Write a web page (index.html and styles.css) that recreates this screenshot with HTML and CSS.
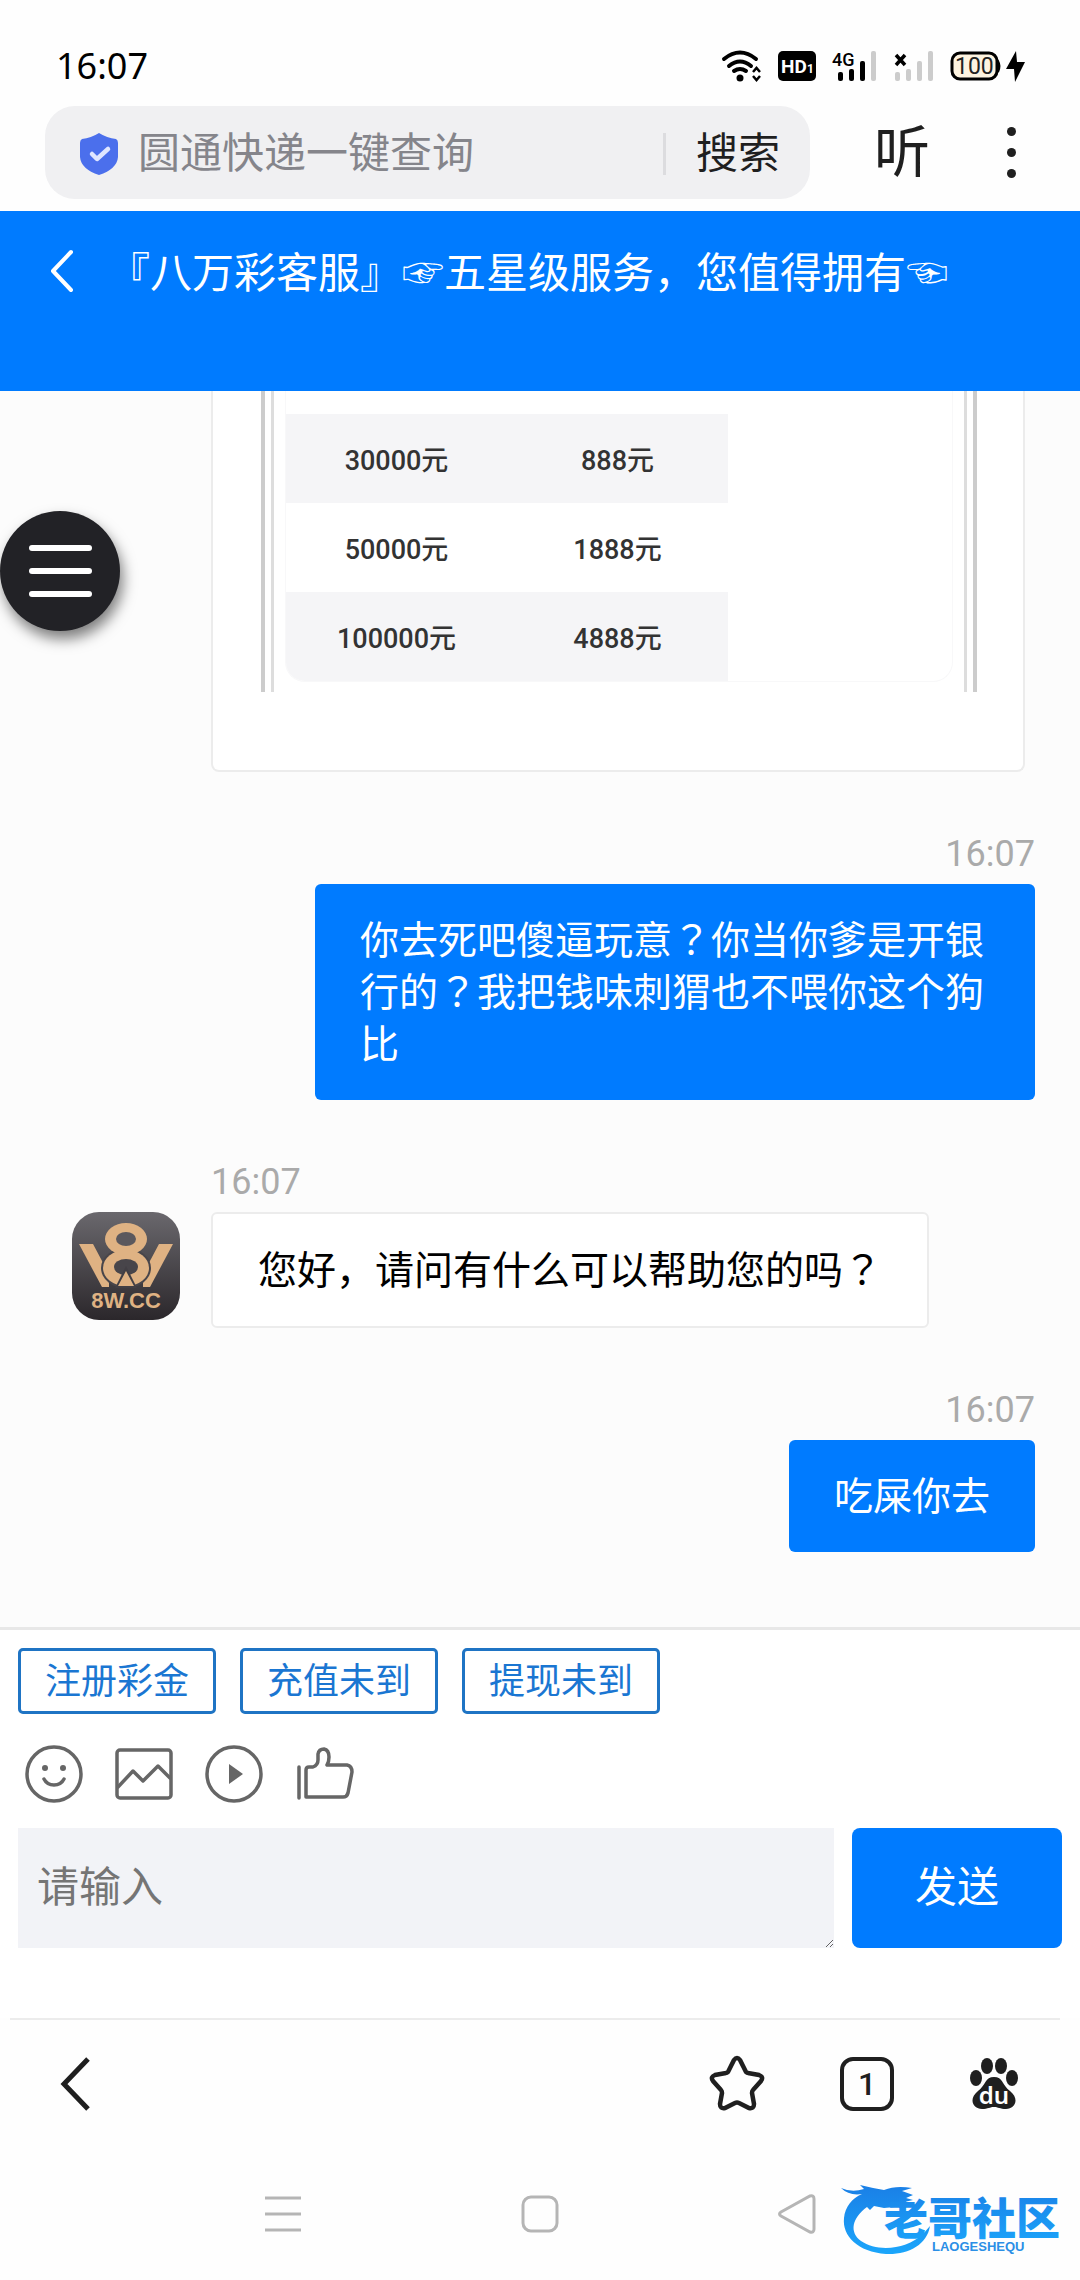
FILE: index.html
```html
<!DOCTYPE html>
<html lang="zh-CN">
<head>
    <meta charset="UTF-8">
    <meta name="viewport" content="width=device-width, initial-scale=1.0">
    <title>八万彩客服</title>
    <link rel="stylesheet" href="styles.css">
</head>
<body>

<div class="status">
    <span class="clock">16:07</span>
    <div class="status-icons">
        <svg class="wifi" width="40" height="32" viewBox="0 0 40 32">
            <g fill="none" stroke="#000" stroke-width="4" stroke-linecap="round">
                <path d="M2 9 Q18 -4 34 9"/>
                <path d="M7 16 Q18 7 29 16"/>
                <path d="M12 21 Q18 17 24 21"/>
            </g>
            <circle cx="18" cy="28" r="3.5"/>
            <path d="M31 22 l3.500 -4 l3.500 4 M31 26 l3.500 4 l3.500 -4" fill="none" stroke="#000" stroke-width="2.500"/>
        </svg>
        <svg class="hd" width="38" height="32" viewBox="0 0 38 32">
            <rect y="1" width="38" height="30" rx="5"/>
            <text x="3" y="23" font-size="19" fill="#fff">HD</text>
            <text x="29" y="23" font-size="12" fill="#fff">1</text>
        </svg>
        <svg class="signal" width="46" height="32" viewBox="0 0 46 32">
            <text class="net" x="0" y="16" font-size="18">4G</text>
            <rect x="6" y="22" width="5" height="9" rx="2"/>
            <rect x="17" y="19" width="5" height="12" rx="2"/>
            <rect x="28" y="11" width="5" height="20" rx="2"/>
            <rect x="39" y="1" width="5" height="30" rx="2" fill="#ccc"/>
        </svg>
        <svg class="signal" width="40" height="32" viewBox="0 0 40 32">
            <path d="M2 5 L11 15 M11 5 L2 15" stroke="#000" stroke-width="3.500"/>
            <g fill="#ccc">
                <rect x="1" y="22" width="5" height="9" rx="2"/>
                <rect x="12" y="19" width="5" height="12" rx="2"/>
                <rect x="23" y="11" width="5" height="20" rx="2"/>
                <rect x="34" y="1" width="5" height="30" rx="2"/>
            </g>
        </svg>
        <svg class="battery" width="76" height="32" viewBox="0 0 76 32">
            <rect x="2" y="3" width="45" height="26" rx="8" fill="#fdf3e0" stroke="#000" stroke-width="3"/>
            <path d="M48 11 q3 5 0 11 z" stroke="#000" stroke-width="2"/>
            <text x="5" y="24" font-size="23" fill="#222">100</text>
            <path d="M66 1 L56 19 H64 L65 32 L75 12 H67 Z"/>
        </svg>
    </div>
</div>

<div class="browser-bar">
    <form class="search">
        <svg width="38" height="42" viewBox="0 0 38 42">
            <path d="M19 0 Q27 5 36 6 Q38 7 38 10 V24 Q37 36 19 42 Q1 36 0 24 V10 Q0 7 2 6 Q11 5 19 0 Z" fill="#4b6fec"/>
            <path d="M12 21 L17 26 L28 16" fill="none" stroke="#dfe6ff" stroke-width="4.500" stroke-linecap="round" stroke-linejoin="round"/>
        </svg>
        <input type="text" aria-label="搜索" placeholder="圆通快递一键查询">
        <button type="button">搜索</button>
    </form>
    <button class="listen">听</button>
    <button class="more" aria-label="更多"><i></i><i></i><i></i></button>
</div>

<header class="chat-header">
    <button aria-label="返回">
        <svg width="24" height="44" viewBox="0 0 24 44">
            <path d="M21 3 L3 22 L21 41" fill="none" stroke="#fff" stroke-width="4" stroke-linecap="round" stroke-linejoin="round"/>
        </svg>
    </button>
    <h1>『八万彩客服』<span class="hand">☞</span>五星级服务，您值得拥有<span class="hand">☜</span></h1>
</header>

<main class="chat">
    <div class="card">
        <div class="frame">
            <div class="frame-inner">
                <div class="sheet">
                    <table>
                        <tr><td>30000元</td><td>888元</td></tr>
                        <tr><td>50000元</td><td>1888元</td></tr>
                        <tr><td>100000元</td><td>4888元</td></tr>
                    </table>
                </div>
            </div>
        </div>
    </div>

    <div class="message mine">
        <time>16:07</time>
        <p class="bubble">你去死吧傻逼玩意<span lang="zh-TW">？</span>你当你爹是开银行的<span lang="zh-TW">？</span>我把钱味刺猬也不喂你这个狗比</p>
    </div>

    <div class="message">
        <time>16:07</time>
        <div class="row">
            <svg class="avatar" width="108" height="108" viewBox="0 0 108 108">
                <defs>
                    <linearGradient id="avatar-bg" x1="0" y1="0" x2="0" y2="1">
                        <stop offset="0" stop-color="#6a686d"/>
                        <stop offset="1" stop-color="#2b272b"/>
                    </linearGradient>
                </defs>
                <rect width="108" height="108" rx="27" fill="url(#avatar-bg)"/>
                <g fill="#dfb283">
                    <path d="M7 32 H21 L37 62 L37 75 H30 Z"/>
                    <path d="M101 32 H87 L71 62 L71 75 H78 Z"/>
                </g>
                <ellipse cx="54" cy="56" rx="25" ry="20" fill="#48454a"/>
                <g fill="#dfb283">
                    <ellipse cx="54" cy="27" rx="21" ry="16"/>
                    <ellipse cx="54" cy="56" rx="23" ry="18"/>
                </g>
                <ellipse cx="54" cy="27" rx="10" ry="7" fill="#5b585d"/>
                <ellipse cx="54" cy="55" rx="12" ry="8" fill="#48454a"/>
                <path d="M54 54 L65 76 H43 Z" fill="#423f44"/>
                <path d="M54 59 L62 74 H46 Z" fill="#dfb283"/>
                <text x="54" y="96" text-anchor="middle" font-size="22">8W.CC</text>
            </svg>
            <p class="bubble">您好，请问有什么可以帮助您的吗<span lang="zh-TW">？</span></p>
        </div>
    </div>

    <div class="message mine">
        <time>16:07</time>
        <p class="bubble">吃屎你去</p>
    </div>

    <button class="float-menu" aria-label="菜单"><i></i><i></i><i></i></button>
</main>

<section class="composer">
    <div class="quick">
        <button>注册彩金</button>
        <button>充值未到</button>
        <button>提现未到</button>
    </div>
    <div class="tools">
        <button aria-label="表情">
            <svg width="58" height="58" viewBox="0 0 58 58">
                <circle cx="29" cy="29" r="27"/>
                <path d="M19 34 Q22 40 29 40 Q36 40 39 34"/>
                <circle class="solid" cx="20" cy="23" r="3"/>
                <circle class="solid" cx="38" cy="23" r="3"/>
            </svg>
        </button>
        <button aria-label="图片">
            <svg width="58" height="58" viewBox="0 0 58 58">
                <rect x="2" y="5" width="54" height="48" rx="3"/>
                <path d="M3 42 L18 26 L28 36 L43 21 L55 33"/>
            </svg>
        </button>
        <button aria-label="视频">
            <svg width="58" height="58" viewBox="0 0 58 58">
                <circle cx="29" cy="29" r="27"/>
                <path class="solid" d="M24 19 V39 L38 29 Z"/>
            </svg>
        </button>
        <button aria-label="点赞">
            <svg width="58" height="58" viewBox="0 0 58 58">
                <path d="M4 22 V53 M11 52 V25 Q11 22 14 22 H18 Q23 20 23 15 V9 Q24 4 29 4 Q34 5 34 12 Q34 17 32 20 H52 Q57 21 57 27 L53 48 Q52 52 48 52 Z"/>
            </svg>
        </button>
    </div>
    <div class="entry">
        <textarea rows="1" aria-label="消息" placeholder="请输入"></textarea>
        <button>发送</button>
    </div>
</section>

<nav class="browser-nav">
    <button aria-label="后退">
        <svg width="32" height="56" viewBox="0 0 32 56">
            <path d="M28 3 L4 28 L28 53" fill="none" stroke="#1f1f1f" stroke-width="5"/>
        </svg>
    </button>
    <div class="nav-right">
        <button aria-label="收藏">
            <svg width="56" height="56" viewBox="0 0 56 56">
                <path d="M25 4 Q28 0 31 4 L37 16 Q38 17 39 17 L50 19 Q55 21 52 25 L44 34 Q43 35 43 37 L45 48 Q45 53 40 52 L30 47 Q28 46 26 47 L16 52 Q11 53 11 48 L13 37 Q13 35 12 34 L4 25 Q1 21 6 19 L17 17 Q18 17 19 16 Z" fill="none" stroke="#1f1f1f" stroke-width="4.500"/>
            </svg>
        </button>
        <button class="tabs">1</button>
        <button aria-label="百度">
            <svg class="paw" width="50" height="54" viewBox="0 0 50 54">
                <ellipse cx="7" cy="21" rx="6" ry="8"/>
                <ellipse cx="18" cy="9" rx="6" ry="8"/>
                <ellipse cx="32" cy="9" rx="6" ry="8"/>
                <ellipse cx="43" cy="21" rx="6" ry="8"/>
                <path d="M25 20 C34 20 33 28 41 34 C51 42 46 52 37 52 C31 52 29 50 25 50 C21 50 19 52 13 52 C4 52 -1 42 9 34 C17 28 16 20 25 20 Z"/>
                <text x="25" y="47" text-anchor="middle" font-size="24" fill="#fff">du</text>
            </svg>
        </button>
    </div>
</nav>

<footer class="system-nav">
    <button aria-label="最近任务">
        <svg width="40" height="40" viewBox="0 0 40 40"><path d="M2 4 H38 M2 20 H38 M2 36 H38"/></svg>
    </button>
    <button aria-label="主页">
        <svg width="40" height="40" viewBox="0 0 40 40"><rect x="3" y="3" width="34" height="34" rx="8"/></svg>
    </button>
    <button aria-label="返回">
        <svg width="40" height="40" viewBox="0 0 40 40"><path d="M33 2 Q37 1 37 5 V35 Q37 39 33 38 L4 22 Q1 20 4 18 Z"/></svg>
    </button>
    <svg class="logo" width="226" height="80" viewBox="0 0 226 80">
        <defs>
            <linearGradient id="logo-fill" x1="0" y1="0" x2="0" y2="1">
                <stop offset="0" stop-color="#1a7fe6"/>
                <stop offset="1" stop-color="#1ba6fb"/>
            </linearGradient>
        </defs>
        <path fill="url(#logo-fill)" d="M1 12 Q12 17 24 13 L20 9 Q32 12 44 14 Q56 9 72 12 L62 15 L73 19 L66 22 L73 24 L60 27 L69 29 L55 31 L44 32 L34 30 L30 34 L27 31 C12 42 9 56 21 65 C37 76 66 74 83 58 L90 50 C87 69 68 79 46 78 C18 76 2 60 4 42 C5 31 12 22 22 18 Q9 20 1 12 Z"/>
        <text class="logo-name" x="44" y="59">老哥社区</text>
        <text class="logo-sub" x="92" y="75">LAOGESHEQU</text>
    </svg>
</footer>

</body>
</html>
```
FILE: styles.css
```css
* {
    box-sizing: border-box;
}
body {
    display: flex;
    flex-direction: column;
    min-height: 100vh;
    margin: 0;
    background: #fefefe;
    color: #000;
    font-family: Roboto, "Noto Sans CJK SC", sans-serif;
}
button {
    padding: 0;
    border: none;
    background: none;
    color: inherit;
    font: inherit;
    cursor: pointer;
}
svg {
    display: block;
    overflow: visible;
}

/* phone status bar */
.status {
    display: flex;
    justify-content: space-between;
    align-items: center;
    padding: 42px 54px 16px 56px;
}
.clock {
    font-family: "Noto Sans", sans-serif;
    font-size: 36px;
    line-height: 48px;
}
.status-icons {
    display: flex;
    gap: 16px;
}
.status-icons text {
    font-family: Roboto, sans-serif;
    font-weight: 700;
}
.status-icons .net {
    font-weight: 500;
}
.status-icons .battery text {
    font-weight: 400;
}

/* address bar */
.browser-bar {
    display: flex;
    align-items: center;
    padding: 0 54px 12px 45px;
}
.search {
    display: flex;
    flex: 1;
    align-items: center;
    height: 93px;
    padding: 2px 30px 0 35px;
    border-radius: 30px;
    background: #f0f0f2;
}
.search input {
    flex: 1;
    min-width: 0;
    margin-left: 20px;
    padding: 0;
    border: none;
    background: none;
    font: inherit;
    font-size: 42px;
    outline: none;
}
.search input::placeholder {
    color: #85858b;
}
.search button {
    padding-left: 30px;
    border-left: 3px solid #dcdcdf;
    color: #1f1f1f;
    font-size: 42px;
    line-height: 42px;
}
.listen {
    margin: 0 67px 0 64px;
    color: #1f1f1f;
    font-size: 56px;
    line-height: 56px;
    font-weight: 400;
}
.more {
    display: flex;
    flex-direction: column;
    gap: 12px;
    padding: 0 10px;
}
.more i {
    width: 9px;
    height: 9px;
    border-radius: 50%;
    background: #1f1f1f;
}

/* chat title */
.chat-header {
    display: flex;
    align-items: flex-start;
    height: 180px;
    padding: 38px 40px 0 50px;
    background: #007bff;
    color: #fff;
}
.chat-header h1 {
    margin: 0 0 0 34px;
    font-size: 42px;
    line-height: 50px;
    font-weight: 400;
    white-space: nowrap;
}
.hand {
    font-family: "DejaVu Sans", sans-serif;
    font-weight: 300;
}

/* messages */
.chat {
    position: relative;
    flex: 1;
    padding: 0 45px 0 72px;
    background: #fcfcfc;
}
.card {
    margin: 0 10px 0 139px;
    padding: 0 46px 78px 48px;
    border: 2px solid #ececec;
    border-top: none;
    border-radius: 0 0 8px 8px;
    background: #fff;
}
.frame {
    padding: 0 6px;
    border: solid #ccc;
    border-width: 0 4px;
}
.frame-inner {
    padding: 0 11px 10px;
    border: solid #ddd;
    border-width: 0 3px;
}
.sheet {
    overflow: hidden;
    padding-top: 23px;
    border: solid #f8f8f9;
    border-width: 0 1px 1px;
    border-radius: 0 0 20px 20px;
}
.sheet table {
    width: 442px;
    border-collapse: collapse;
    table-layout: fixed;
    color: #333;
    font-size: 27px;
    font-weight: 500;
    text-align: center;
}
.sheet td {
    height: 89px;
    padding: 0;
}
.sheet tr:nth-child(odd) {
    background: #f5f5f7;
}
.message {
    display: flex;
    flex-direction: column;
    align-items: flex-start;
    margin-top: 62px;
}
.message time {
    margin: 0 0 10px 139px;
    color: #aaa;
    font-size: 36px;
    line-height: 40px;
}
.row {
    display: flex;
    align-items: flex-start;
    gap: 31px;
}
.avatar {
    flex: none;
}
.avatar text {
    fill: #dfb283;
    font-family: "Liberation Sans", sans-serif;
    font-weight: 700;
}
.bubble {
    max-width: 720px;
    margin: 0;
    padding: 31px 45px 29px;
    border: 2px solid #ececec;
    border-radius: 6px;
    background: #fff;
    font-size: 39px;
    line-height: 52px;
}
.mine {
    align-items: flex-end;
}
.mine .bubble {
    border: none;
    background: #007bff;
    color: #fff;
}
.float-menu {
    position: absolute;
    top: 120px;
    left: 0;
    display: flex;
    flex-direction: column;
    justify-content: center;
    align-items: center;
    gap: 17px;
    width: 120px;
    height: 120px;
    border-radius: 50%;
    background: #222226;
    box-shadow: 3px 8px 14px rgba(0, 0, 0, 0.5);
}
.float-menu i {
    width: 63px;
    height: 6px;
    border-radius: 3px;
    background: #fff;
}

/* input area */
.composer {
    padding: 18px 18px 70px;
    border-top: 3px solid #e8e8e8;
    background: #fff;
}
.quick {
    display: flex;
    gap: 24px;
}
.quick button {
    height: 66px;
    padding: 2px 24px 0;
    border: 3px solid #1f74c4;
    border-radius: 5px;
    color: #1a76d2;
    font-size: 36px;
    line-height: 58px;
}
.tools {
    display: flex;
    gap: 32px;
    padding: 31px 7px 25px;
}
.tools svg {
    fill: none;
    stroke: #666;
    stroke-width: 3.5px;
    stroke-linejoin: round;
    stroke-linecap: round;
}
.tools .solid {
    fill: #666;
    stroke: none;
}
.entry {
    display: flex;
    gap: 18px;
}
.entry textarea {
    flex: 1;
    height: 120px;
    padding: 30px 19px;
    border: none;
    background: #f2f3f7;
    font: inherit;
    font-size: 42px;
    line-height: 60px;
    outline: none;
}
.entry textarea::placeholder {
    color: #757575;
}
.entry button {
    width: 210px;
    border-radius: 8px;
    background: #007bff;
    color: #fff;
    font-size: 42px;
    line-height: 60px;
}

/* browser toolbar */
.browser-nav {
    display: flex;
    justify-content: space-between;
    align-items: center;
    height: 130px;
    margin: 0 20px 0 10px;
    padding: 0 41px 0 50px;
    border-top: 2px solid #ececec;
}
.nav-right {
    display: flex;
    align-items: center;
    gap: 75px;
}
.tabs {
    width: 54px;
    height: 54px;
    border: 4px solid #1f1f1f;
    border-radius: 13px;
    color: #1f1f1f;
    font-size: 32px;
    line-height: 46px;
    font-weight: 500;
}
.paw {
    fill: #1f1f1f;
}
.paw text {
    font-family: "Noto Sans", sans-serif;
    font-weight: 600;
}

/* system keys */
.system-nav {
    position: relative;
    display: flex;
    justify-content: center;
    align-items: center;
    gap: 217px;
    height: 132px;
}
.system-nav button svg {
    fill: none;
    stroke: #b5b5b5;
    stroke-width: 3px;
}
.logo {
    position: absolute;
    top: 28px;
    right: 14px;
}
.logo-name {
    fill: url(#logo-fill);
    font-family: "Noto Sans CJK SC", sans-serif;
    font-size: 44px;
    font-weight: 900;
}
.logo-sub {
    fill: #2b8fe6;
    font-family: "Liberation Sans", sans-serif;
    font-size: 13px;
    font-weight: 700;
}
```
